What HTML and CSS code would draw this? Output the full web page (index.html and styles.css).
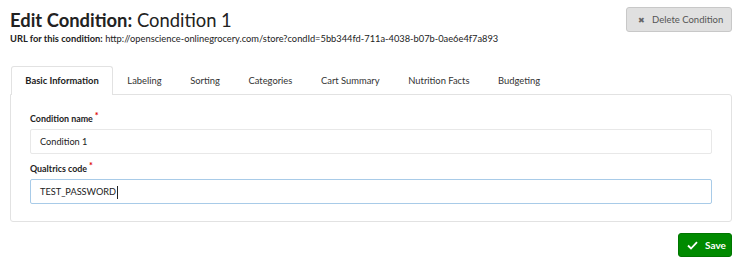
FILE: index.html
```html
<!doctype html>
<html lang="en">
<head>
 <meta charset="UTF-8">
 <title>Edit Condition</title>
 <link rel="stylesheet" href="styles.css">
</head>
<body>
<div class="page">
 <div class="head">
  <div class="head-text">
   <h1><b>Edit Condition:</b> Condition 1</h1>
   <p class="url"><b>URL for this condition:</b> http://openscience-onlinegrocery.com/store?condId=5bb344fd-711a-4038-b07b-0ae6e4f7a893</p>
  </div>
  <button class="btn btn-delete"><span class="x">&#10006;</span>Delete Condition</button>
 </div>

 <ul class="tabs">
  <li class="active">Basic Information</li>
  <li>Labeling</li>
  <li>Sorting</li>
  <li>Categories</li>
  <li>Cart Summary</li>
  <li>Nutrition Facts</li>
  <li>Budgeting</li>
 </ul>
 <div class="panel">
  <label class="field-label">Condition name<span class="req">*</span></label>
  <div class="input">Condition 1</div>
  <label class="field-label">Qualtrics code<span class="req">*</span></label>
  <div class="input focus">TEST_PASSWORD<span class="caret"></span></div>
 </div>

 <div class="foot">
  <button class="btn btn-save">
   <svg width="11" height="9" viewBox="0 0 11 9"><path d="M1 4.5 L4 7.5 L10 1.2" fill="none" stroke="#fff" stroke-width="1.8"/></svg>
   Save
  </button>
 </div>
</div>
</body>
</html>
```

FILE: styles.css
```css
*{
 margin:0;
 padding:0;
 box-sizing:border-box;
}
body{
 font-family:Lato,"Open Sans",sans-serif;
 color:#222;
 background:#fff;
}
.page{
 padding:7px 24px 0 10px;
 width:756px;
}
.head{
 display:flex;
 justify-content:space-between;
 align-items:flex-start;
}
.head-text{
 padding-top:2px;
}
h1{
 font-size:18.4px;
 font-weight:400;
 line-height:22px;
 color:#222;
}
h1 b{
 font-weight:700;
}
.url{
 font-size:9.3px;
 line-height:14px;
 margin-top:1px;
 color:#222;
}
.btn{
 font-family:Lato,"Open Sans",sans-serif;
 border-radius:3px;
 cursor:pointer;
 display:flex;
 align-items:center;
 white-space:nowrap;
}
.btn-delete{
 width:106px;
 height:25px;
 background:#e0e0e0;
 border:1px solid #c8c8c8;
 color:#555;
 font-size:9.5px;
 padding-left:11px;
}
.btn-delete .x{
 font-size:8px;
 margin-right:7px;
 color:#666;
}
.tabs{
 list-style:none;
 display:flex;
 margin-top:20px;
 padding-left:1px;
 height:29px;
}
.tabs li{
 font-size:9.4px;
 color:#333;
 padding:0 13.3px;
 line-height:28px;
 white-space:nowrap;
 border:1px solid transparent;
 border-bottom:none;
}
.tabs li.active{
 font-weight:700;
 color:#222;
 border-color:#e2e2e2;
 border-radius:3px 3px 0 0;
 background:#fff;
 height:29px;
 position:relative;
 z-index:1;
}
.panel{
 border:1px solid #e2e2e2;
 border-radius:0 3px 3px 3px;
 height:128px;
 margin-top:-1px;
 padding:17px 19px 0 19px;
}
.field-label{
 display:block;
 font-size:8.9px;
 font-weight:700;
 color:#222;
 line-height:14px;
 margin-bottom:3px;
}
.req{
 color:#d00;
 font-size:9px;
 vertical-align:top;
 margin-left:2px;
 position:relative;
 top:-3px;
}
.input{
 height:25px;
 border:1px solid #e8e8e8;
 border-radius:2px;
 font-size:9.2px;
 color:#222;
 padding-left:9px;
 line-height:23px;
 margin-bottom:8px;
}
.input.focus{
 border-color:#a8cbe8;
}
.caret{
 display:inline-block;
 width:1px;
 height:13px;
 background:#222;
 vertical-align:middle;
 margin-left:1px;
}
.foot{
 display:flex;
 justify-content:flex-end;
 margin-top:11px;
}
.btn-save{
 width:54px;
 height:24px;
 background:#008a00;
 border:1px solid #007500;
 color:#fff;
 font-size:10px;
 font-weight:700;
 padding-left:8px;
 gap:7px;
}
```
